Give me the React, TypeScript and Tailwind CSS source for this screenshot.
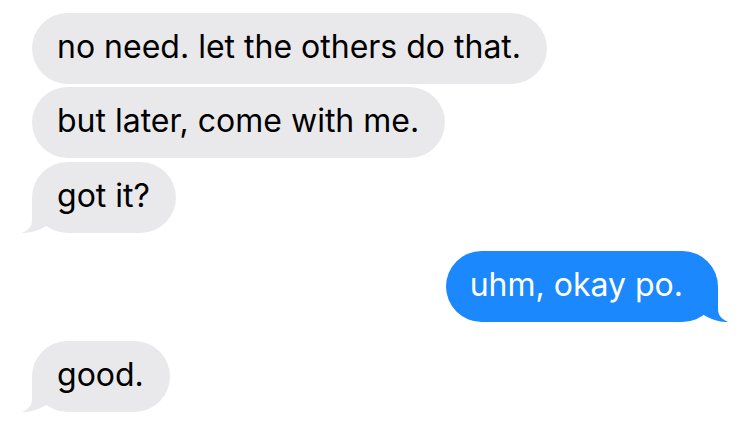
import React from "react";

const GRAY = "#E9E9EB";
const BLUE = "#1B88FD";

function Tail({ color, side }: { color: string; side: "left" | "right" }) {
  return (
    <svg
      width="32"
      height="36"
      viewBox="-11 -36 32 36"
      className={
        side === "left"
          ? "absolute left-[-11px] bottom-0"
          : "absolute right-[-11px] bottom-0 scale-x-[-1]"
      }
    >
      <path
        d="M0,-36 L0,-13 C0,-6 -4.5,-2 -10.5,-0.2 C-3,0.6 6,-2 15,-7.5 L21,-36 Z"
        fill={color}
      />
    </svg>
  );
}

function Received({ text, tail, className = "" }: { text: string; tail?: boolean; className?: string }) {
  return (
    <div className={"flex justify-start " + className}>
      <div className="relative h-[71px] rounded-[36px] bg-[#E9E9EB] pl-[25px] pr-[26px] flex items-center">
        {tail && <Tail color={GRAY} side="left" />}
        <span className="relative text-black pb-[4px]">{text}</span>
      </div>
    </div>
  );
}

function Sent({ text, className = "" }: { text: string; className?: string }) {
  return (
    <div className={"flex justify-end " + className}>
      <div className="relative h-[71px] rounded-[36px] bg-[#1B88FD] pl-[24px] pr-[35px] flex items-center">
        <Tail color={BLUE} side="right" />
        <span className="relative text-white pb-[4px]">{text}</span>
      </div>
    </div>
  );
}

export default function App() {
  return (
    <div
      className="w-[750px] h-[447px] bg-white px-[32px] pt-[13px] flex flex-col text-[32px] leading-[38px] overflow-hidden"
      style={{ fontFamily: "Inter, 'Noto Sans', sans-serif" }}
    >
      <Received text="no need. let the others do that." />
      <Received text="but later, come with me." className="mt-[3px]" />
      <Received text="got it?" tail className="mt-[4px]" />
      <Sent text="uhm, okay po." className="mt-[18px]" />
      <Received text="good." tail className="mt-[19px]" />
    </div>
  );
}
